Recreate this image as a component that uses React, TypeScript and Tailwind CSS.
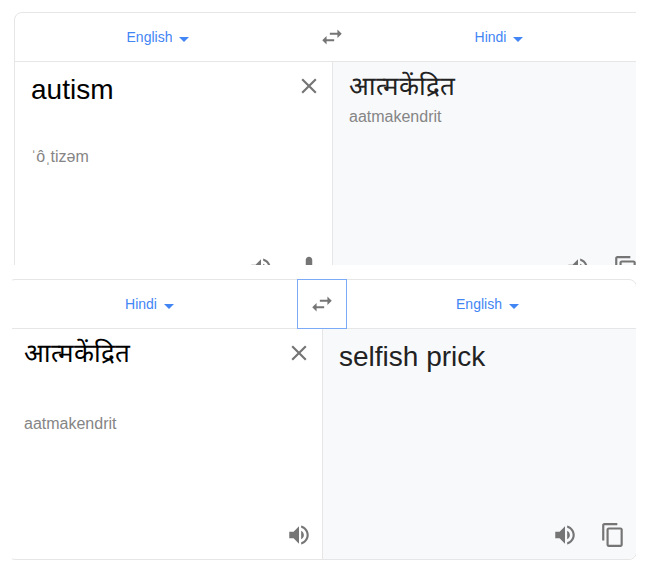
import React from "react";

const LANGUAGES = ["English", "Hindi"];

function Icon({ d }: { d: string }) {
    return (
        <svg viewBox="0 0 24 24" className="size-[26px] shrink-0" fill="currentColor" aria-hidden="true">
            <path d={d} />
        </svg>
    );
}

const ICONS = {
    swap: "M6.99 11L3 15l3.99 4v-3H14v-2H6.99v-3zM21 9l-3.99-4v3H10v2h7.01v3L21 9z",
    close: "M19 6.41L17.59 5 12 10.59 6.41 5 5 6.41 10.59 12 5 17.59 6.41 19 12 13.41 17.59 19 19 17.59 13.41 12z",
    speaker:
        "M3 9v6h4l5 5V4L7 9H3zm13.5 3c0-1.77-1.02-3.29-2.5-4.03v8.05c1.48-.73 2.5-2.25 2.5-4.02zM14 3.23v2.06c2.89.86 5 3.54 5 6.71s-2.11 5.85-5 6.71v2.06c4.01-.91 7-4.49 7-8.77s-2.99-7.86-7-8.77z",
    mic: "M12 15c1.66 0 2.99-1.34 2.99-3L15 4.5C15 2.84 13.66 1.5 12 1.5S9 2.84 9 4.5V12c0 1.66 1.34 3 3 3zm5.3-3c0 3-2.54 5.1-5.3 5.1S6.7 15 6.7 12H5c0 3.42 2.72 6.23 6 6.72V22h2v-3.28c3.28-.48 6-3.3 6-6.72h-1.7z",
    copy: "M16 1H4c-1.1 0-2 .9-2 2v14h2V3h12V1zm3 4H8c-1.1 0-2 .9-2 2v14c0 1.1.9 2 2 2h11c1.1 0 2-.9 2-2V7c0-1.1-.9-2-2-2zm0 16H8V7h11v14z",
};

// Devanagari runs taller than Latin, so it gets a smaller size and sits higher
const TEXT_STYLES: Record<string, string> = {
    English: "mt-2 h-9 pt-1 text-[28px] leading-8",
    Hindi: "mt-2 h-9 text-[26px] leading-8 font-light",
};

function LanguageSelect({ label, value }: { label: string; value: string }) {
    return (
        <div className="flex items-center justify-center">
            <div className="relative text-[#4285f4]">
                <select
                    aria-label={label}
                    defaultValue={value}
                    className="block h-5 cursor-pointer appearance-none field-sizing-content bg-transparent pr-6 text-sm leading-5 outline-none"
                >
                    {LANGUAGES.map((name) => (
                        <option key={name}>{name}</option>
                    ))}
                </select>
                <svg viewBox="0 0 24 24" className="pointer-events-none absolute right-0 top-0 size-6" fill="currentColor" aria-hidden="true">
                    <path d="M7 10l5 5 5-5z" />
                </svg>
            </div>
        </div>
    );
}

type TranslatorProps = {
    from: string;
    to: string;
    source: string;
    sourceReading: string;
    target: string;
    targetReading?: string;
    mic?: boolean;
    swapFocused?: boolean;
};

function Translator({ from, to, source, sourceReading, target, targetReading, mic, swapFocused }: TranslatorProps) {
    return (
        <section className="rounded-lg border border-[#e6e6e6] bg-white">
            {/* Language bar */}
            <div className="grid h-12 grid-cols-[1fr_48px_1fr]">
                <LanguageSelect label="Source language" value={from} />
                <button
                    type="button"
                    aria-label="Swap languages"
                    className={
                        swapFocused
                            ? "relative flex items-center justify-center text-[#757575] outline outline-[#7baaf7]"
                            : "flex items-center justify-center text-[#757575]"
                    }
                >
                    <Icon d={ICONS.swap} />
                </button>
                <LanguageSelect label="Target language" value={to} />
            </div>

            <div className="grid min-h-[231px] grid-cols-2 border-t border-[#e6e6e6]">
                {/* Source text */}
                <div className="flex flex-col pb-[11px] pl-4 pr-[10px]">
                    <div className="flex items-start gap-4">
                        <textarea
                            aria-label="Source text"
                            rows={1}
                            spellCheck={false}
                            defaultValue={source}
                            className={`min-w-0 flex-1 resize-none overflow-hidden bg-transparent text-black outline-none ${TEXT_STYLES[from]}`}
                        />
                        <button type="button" aria-label="Clear" className="mt-[11px] text-[#757575]">
                            <Icon d={ICONS.close} />
                        </button>
                    </div>
                    <p className="mt-10 leading-[22px] text-[#858585]">{sourceReading}</p>
                    <div className="mt-auto flex justify-end gap-[22px] text-[#757575]">
                        <button type="button" aria-label="Listen to source">
                            <Icon d={ICONS.speaker} />
                        </button>
                        {mic && (
                            <button type="button" aria-label="Speak">
                                <Icon d={ICONS.mic} />
                            </button>
                        )}
                    </div>
                </div>

                {/* Translation */}
                <div className="flex flex-col rounded-br-lg border-l border-[#e6e6e6] bg-[#f8f9fb] pb-[11px] pl-4 pr-[10px]">
                    <p className={`text-[#222222] ${TEXT_STYLES[to]}`}>{target}</p>
                    {targetReading && <p className="leading-[22px] text-[#858585]">{targetReading}</p>}
                    <div className="mt-auto flex justify-end gap-[22px] text-[#757575]">
                        <button type="button" aria-label="Listen to translation">
                            <Icon d={ICONS.speaker} />
                        </button>
                        <button type="button" aria-label="Copy translation">
                            <Icon d={ICONS.copy} />
                        </button>
                    </div>
                </div>
            </div>
        </section>
    );
}

export default function App() {
    return (
        <main className="flex min-h-screen flex-col gap-[14px] bg-white px-3 pt-3 font-['Liberation_Sans',Arial,sans-serif]">
            {/* First card runs past the right and bottom edges of its frame */}
            <div className="ml-[2px] h-[253px] overflow-hidden">
                <div className="-mr-[14px]">
                    <Translator
                        from="English"
                        to="Hindi"
                        source="autism"
                        sourceReading="ˈôˌtizəm"
                        target="आत्मकेंद्रित"
                        targetReading="aatmakendrit"
                        mic
                    />
                </div>
            </div>

            {/* Second card is cut at both sides */}
            <div className="overflow-hidden">
                <div className="-ml-[5px] -mr-px">
                    <Translator
                        from="Hindi"
                        to="English"
                        source="आत्मकेंद्रित"
                        sourceReading="aatmakendrit"
                        target="selfish prick"
                        swapFocused
                    />
                </div>
            </div>
        </main>
    );
}
